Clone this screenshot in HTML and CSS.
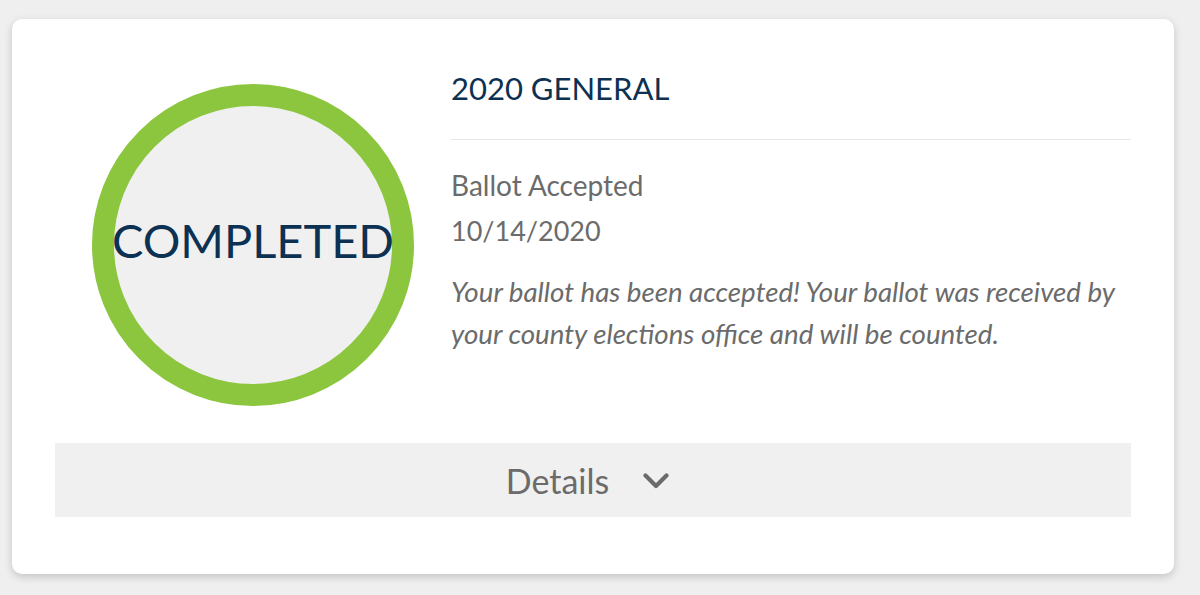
FILE: index.html
```html
<!DOCTYPE html>
<html lang="en">
<head>
<meta charset="utf-8">
<title>Ballot Status</title>
<link rel="stylesheet" href="styles.css">
</head>
<body>
<div class="card">
  <div class="top">
    <div class="status-ring">
      <span class="status-label">COMPLETED</span>
    </div>
    <div class="info">
      <h2 class="election">2020 GENERAL</h2>
      <div class="divider"></div>
      <p class="status">Ballot Accepted</p>
      <p class="date">10/14/2020</p>
      <p class="message">Your ballot has been accepted! Your ballot was received by your county elections office and will be counted.</p>
    </div>
  </div>
  <div class="details">
    <span class="details-label">Details</span>
    <svg class="chevron" width="26" height="17" viewBox="0 0 26 17" aria-hidden="true">
      <path d="M2.5 2.5 L13 13 L23.5 2.5" fill="none" stroke="#6b6b6b" stroke-width="4.2" stroke-linecap="round" stroke-linejoin="round"/>
    </svg>
  </div>
</div>
</body>
</html>
```

FILE: styles.css
```css
html, body {
  margin: 0;
  padding: 0;
}
body {
  background: #efefef;
  font-family: Lato, "Open Sans", sans-serif;
  padding: 19px 26px 0 12px;
  height: 595px;
  box-sizing: border-box;
}
.card {
  width: 1162px;
  height: 555px;
  box-sizing: border-box;
  background: #ffffff;
  border-radius: 10px;
  box-shadow: 0 3px 8px rgba(0, 0, 0, 0.18);
  padding: 50px 43px 0 43px;
}
.top {
  display: flex;
  align-items: flex-start;
  height: 374px;
}
.status-ring {
  flex: 0 0 auto;
  width: 322px;
  height: 322px;
  box-sizing: border-box;
  margin: 15px 37px 0 37px;
  border: 22px solid #8cc63f;
  border-radius: 50%;
  background: #f0f0f0;
  display: flex;
  align-items: center;
  justify-content: center;
}
.status-label {
  white-space: nowrap;
  font-size: 47px;
  color: #0c3152;
  letter-spacing: 0;
  margin-top: -10px;
}
.info {
  flex: 1 1 auto;
}
.election {
  margin: 0;
  font-size: 31px;
  font-weight: 400;
  line-height: 38px;
  color: #0c3152;
}
.divider {
  margin-top: 32px;
  border-top: 1px solid #e6e6e6;
}
.status, .date {
  margin: 0;
  font-size: 27px;
  line-height: 45px;
  color: #6b6b6b;
}
.status {
  margin-top: 23px;
  font-size: 28px;
}
.message {
  margin: 18px 0 0 0;
  font-size: 27.7px;
  line-height: 42px;
  font-style: italic;
  color: #6b6b6b;
}
.details {
  height: 74px;
  background: #f0f0f0;
  display: flex;
  align-items: center;
  justify-content: center;
  gap: 34px;
  padding-right: 11px;
}
.details-label {
  font-size: 34px;
  color: #6b6b6b;
}
.chevron {
  display: block;
  margin-top: 2px;
}
```
